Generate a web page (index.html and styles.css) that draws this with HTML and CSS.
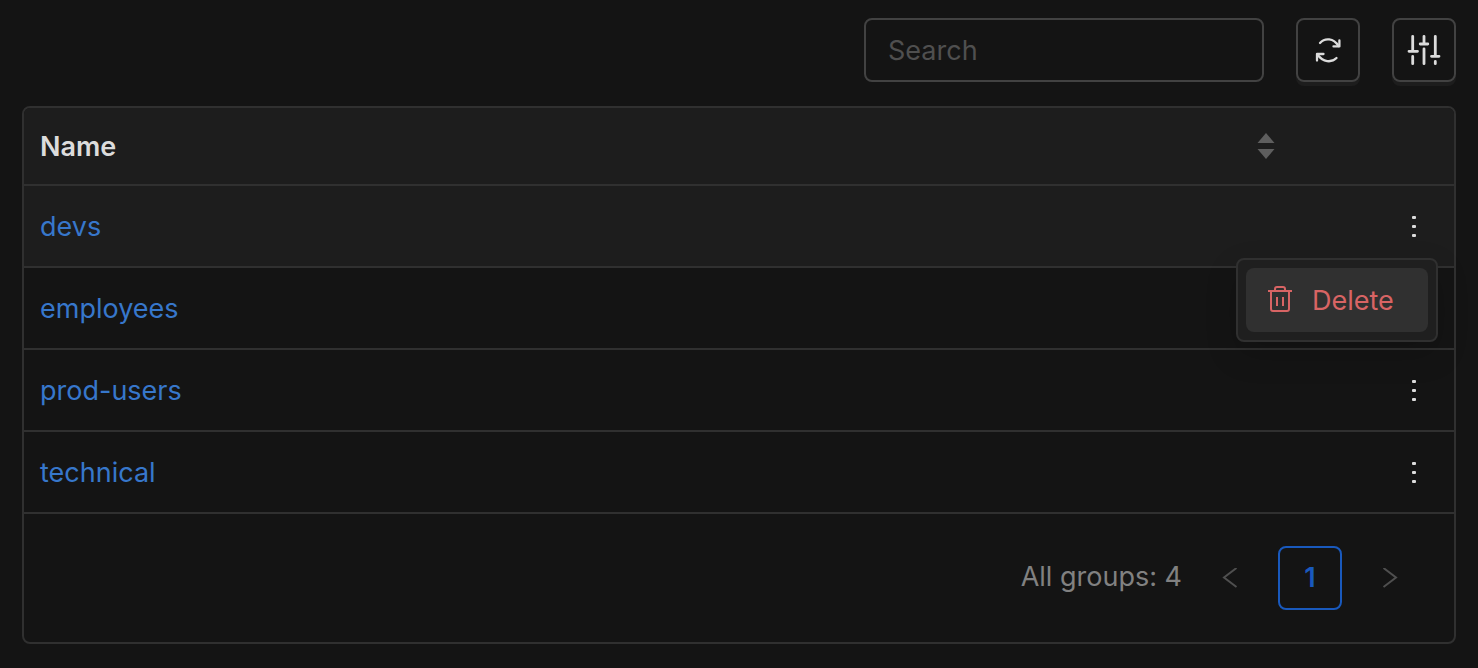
FILE: index.html
```html
<!DOCTYPE html>
<html lang="en">
<head>
  <meta charset="UTF-8">
  <meta name="viewport" content="width=device-width, initial-scale=1.0">
  <title>Groups</title>
  <link rel="stylesheet" href="styles.css">
</head>
<body>

  <div class="toolbar">
    <input class="search" type="text" placeholder="Search" aria-label="Search">
    <button class="icon-btn" type="button" aria-label="Refresh">
      <svg width="32" height="32" viewBox="0 0 32 32" fill="none" stroke="currentColor" stroke-width="2.300" stroke-linecap="round" stroke-linejoin="round">
        <path d="M8 9C13 3.500 21.500 4 26.500 12"/>
        <path d="M27.400 6.500V12.400H21.500"/>
        <path d="M24.500 24C19.500 29 11 28.500 5.500 20.500"/>
        <path d="M5 26.500V20H11.500"/>
      </svg>
    </button>
    <button class="icon-btn" type="button" aria-label="Columns">
      <svg width="36" height="36" viewBox="0 0 36 36" fill="none" stroke="currentColor" stroke-width="2.800" stroke-linecap="round">
        <path d="M6.700 4.300V18M3 19.300H11.500M6.700 24.500V31.700"/>
        <path d="M18 4.300V10.500M14.200 12H21.800M18 16.800V31.700"/>
        <path d="M29.300 4.300V23M25.500 24.300H33M29.300 29.500V31.700"/>
      </svg>
    </button>
  </div>

  <div class="card">
    <table class="groups">
      <thead>
        <tr>
          <th>
            <div class="head-cell">
              <span>Name</span>
              <svg class="sorter" width="18" height="26" viewBox="0 0 18 26" fill="currentColor">
                <path d="M9 0L17.500 10H0.500Z"/>
                <path d="M0.500 16H17.500L9 26Z"/>
              </svg>
            </div>
          </th>
          <th class="actions"></th>
        </tr>
      </thead>
      <tbody>
        <tr class="hovered">
          <td><a href="#">devs</a></td>
          <td class="actions">
            <button class="more" type="button" aria-label="Actions"><span></span><span></span><span></span></button>
            <div class="menu">
              <button class="menu-item" type="button">
                <svg width="28" height="28" viewBox="0 0 28 28" fill="none" stroke="currentColor" stroke-width="2" stroke-linejoin="round">
                  <path d="M2 5H26"/>
                  <path d="M9 5V3Q9 1 11 1H17Q19 1 19 3V5"/>
                  <path d="M5 5V23Q5 25 7 25H21Q23 25 23 23V5"/>
                  <path d="M11 11V20M17 11V20"/>
                </svg>
                <span>Delete</span>
              </button>
            </div>
          </td>
        </tr>
        <tr>
          <td><a href="#">employees</a></td>
          <td class="actions">
            <button class="more" type="button" aria-label="Actions"><span></span><span></span><span></span></button>
          </td>
        </tr>
        <tr>
          <td><a href="#">prod-users</a></td>
          <td class="actions">
            <button class="more" type="button" aria-label="Actions"><span></span><span></span><span></span></button>
          </td>
        </tr>
        <tr>
          <td><a href="#">technical</a></td>
          <td class="actions">
            <button class="more" type="button" aria-label="Actions"><span></span><span></span><span></span></button>
          </td>
        </tr>
      </tbody>
    </table>

    <div class="pagination">
      <span class="total">All groups: 4</span>
      <button class="page-btn" type="button" aria-label="Previous page" disabled>
        <svg width="16" height="20" viewBox="0 0 16 20" fill="none" stroke="currentColor" stroke-width="2">
          <path d="M14.500 0L2 9.500L14.500 19"/>
        </svg>
      </button>
      <button class="page-btn current" type="button">1</button>
      <button class="page-btn" type="button" aria-label="Next page" disabled>
        <svg width="16" height="20" viewBox="0 0 16 20" fill="none" stroke="currentColor" stroke-width="2">
          <path d="M1.500 0L14 9.500L1.500 19"/>
        </svg>
      </button>
    </div>
  </div>

</body>
</html>
```
FILE: styles.css
```css
* {
  box-sizing: border-box;
}

body {
  margin: 0;
  padding: 18px 22px;
  font-family: Inter, "Liberation Sans", sans-serif;
  font-size: 27px;
  line-height: 44px;
  background: #141414;
  color: #dcdcdc;
}

button, input {
  font: inherit;
  color: inherit;
  background: transparent;
  border: none;
  margin: 0;
  padding: 0;
}

button {
  cursor: pointer;
}

svg {
  display: block;
  flex: none;
}

.toolbar {
  display: flex;
  justify-content: flex-end;
  gap: 32px;
  margin-bottom: 24px;
}

.search {
  width: 400px;
  height: 64px;
  padding: 0 22px;
  border: 2px solid #424242;
  border-radius: 8px;
}

.search::placeholder {
  color: #4f4f4f;
  opacity: 1;
}

.icon-btn {
  display: flex;
  align-items: center;
  justify-content: center;
  width: 64px;
  height: 64px;
  border: 2px solid #424242;
  border-radius: 8px;
  box-shadow: 0 4px 0 #1d1d1d;
}

.card {
  border: 2px solid #303030;
  border-radius: 8px;
}

.groups {
  width: 100%;
  border-collapse: separate;
  border-spacing: 0;
}

.groups th,
.groups td {
  padding: 16px;
  border-bottom: 2px solid #303030;
  text-align: left;
}

.groups th {
  background: #1d1d1d;
  font-weight: 600;
}

.groups th:first-child {
  border-top-left-radius: 6px;
}

.groups th:last-child {
  border-top-right-radius: 6px;
}

.groups td {
  height: 82px;
}

.hovered td {
  background: #1d1d1d;
}

.groups a {
  display: block;
  width: fit-content;
  padding-top: 2px;
  color: #3777cb;
  text-decoration: none;
}

.groups .actions {
  position: relative;
  width: 163px;
}

.head-cell {
  display: flex;
  align-items: center;
  justify-content: space-between;
  height: 44px;
}

.head-cell span,
.menu-item span {
  padding-top: 2px;
}

.sorter {
  color: #5e5e5e;
}

.more {
  display: flex;
  flex-direction: column;
  align-items: center;
  justify-content: center;
  gap: 6px;
  width: 48px;
  height: 48px;
  margin-left: auto;
}

.more span {
  width: 4px;
  height: 3px;
  border-radius: 1px;
  background: #dcdcdc;
}

.menu {
  position: absolute;
  top: 72px;
  right: 16px;
  z-index: 10;
  padding: 8px;
  background: #1f1f1f;
  border: 2px solid #303030;
  border-radius: 8px;
  box-shadow: 0 12px 32px rgba(0, 0, 0, 0.15);
}

.menu-item {
  display: flex;
  align-items: center;
  gap: 18px;
  width: 182px;
  height: 64px;
  padding: 0 20px;
  background: #303030;
  border-radius: 8px;
  color: #d86464;
}

.pagination {
  display: flex;
  align-items: center;
  justify-content: flex-end;
  gap: 16px;
  padding: 32px;
}

.total {
  padding-bottom: 2px;
  color: #818181;
}

.page-btn {
  display: flex;
  align-items: center;
  justify-content: center;
  width: 64px;
  height: 64px;
  border-radius: 8px;
  color: #4f4f4f;
}

.page-btn.current {
  border: 2px solid #1959bd;
  color: #1959bd;
  font-weight: 600;
}
```
